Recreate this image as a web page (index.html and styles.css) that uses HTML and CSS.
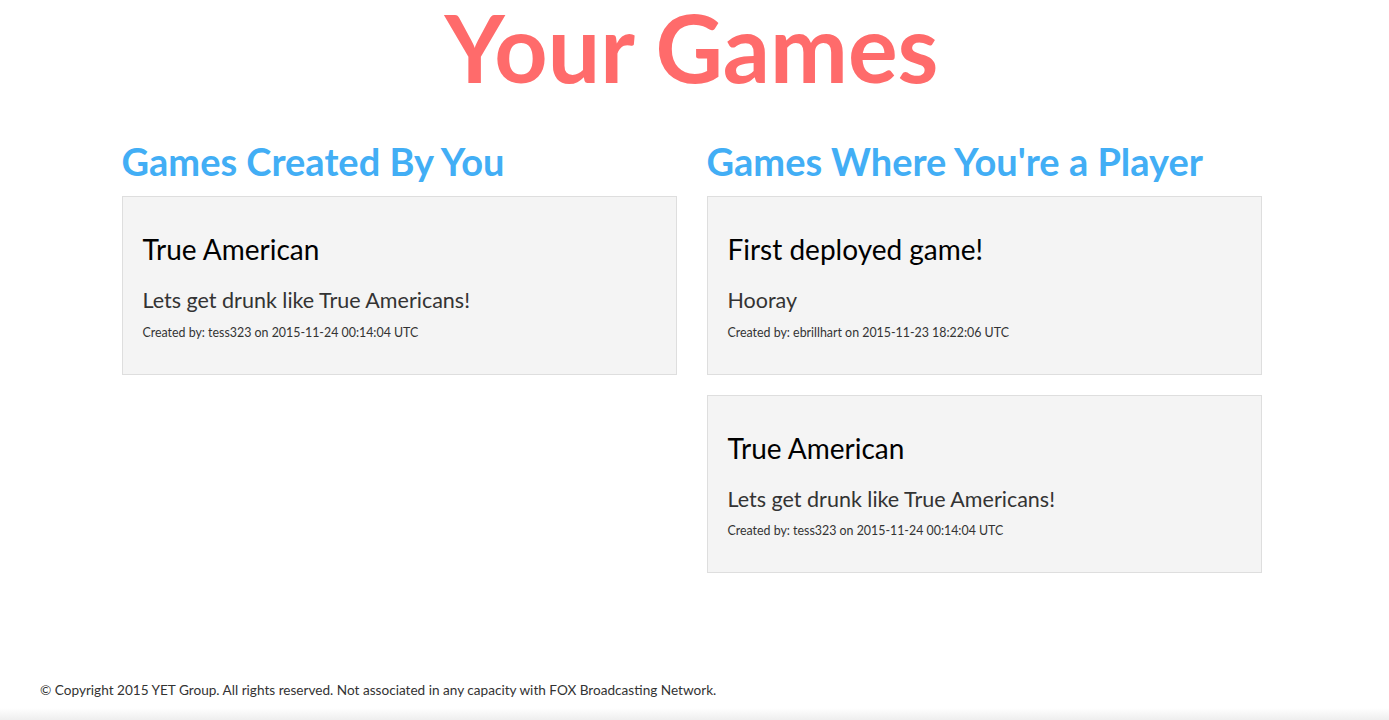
FILE: index.html
```html
<!DOCTYPE html>
<html>
<head>
<meta charset="utf-8">
<title>Your Games</title>
<link rel="stylesheet" href="styles.css">
</head>
<body>
<div class="page">
  <main class="main">
    <h1 class="title">Your Games</h1>
    <div class="columns">
      <section class="column">
        <h2 class="col-heading">Games Created By You</h2>
        <div class="card">
          <h3 class="card-title">True American</h3>
          <p class="card-desc">Lets get drunk like True Americans!</p>
          <p class="card-meta">Created by: tess323 on 2015-11-24 00:14:04 UTC</p>
        </div>
      </section>
      <section class="column">
        <h2 class="col-heading">Games Where You're a Player</h2>
        <div class="card">
          <h3 class="card-title">First deployed game!</h3>
          <p class="card-desc">Hooray</p>
          <p class="card-meta">Created by: ebrillhart on 2015-11-23 18:22:06 UTC</p>
        </div>
        <div class="card">
          <h3 class="card-title">True American</h3>
          <p class="card-desc">Lets get drunk like True Americans!</p>
          <p class="card-meta">Created by: tess323 on 2015-11-24 00:14:04 UTC</p>
        </div>
      </section>
    </div>
  </main>
  <footer class="footer">© Copyright 2015 YET Group. All rights reserved. Not associated in any capacity with FOX Broadcasting Network.</footer>
</div>
</body>
</html>
```

FILE: styles.css
```css
html, body {
  margin: 0;
  padding: 0;
  background: #fff;
}
body {
  font-family: "Lato", "Liberation Sans", sans-serif;
  color: #222;
}
.page {
  min-height: 100vh;
  display: flex;
  flex-direction: column;
}
.main {
  flex: 1;
  padding-right: 6px;
}
.title {
  margin: 0;
  text-align: center;
  font-size: 93px;
  line-height: 94px;
  font-weight: 700;
  color: #ff6b6b;
}
.columns {
  width: 1140px;
  margin: 44px auto 0;
  display: grid;
  grid-template-columns: 1fr 1fr;
  column-gap: 30px;
  align-items: start;
}
.column {
  display: flex;
  flex-direction: column;
  gap: 20px;
}
.col-heading {
  margin: 0 0 -8px;
  font-size: 38px;
  line-height: 46px;
  font-weight: 700;
  color: #42aef5;
  white-space: nowrap;
}
.card {
  background: #f4f4f4;
  border: 1px solid #dedede;
  padding: 35px 20px 33px;
}
.card-title {
  margin: 0;
  font-size: 28px;
  line-height: 34px;
  font-weight: 400;
  color: #000;
}
.card-desc {
  margin: 20px 0 0;
  font-size: 21.5px;
  line-height: 28px;
  color: #333;
}
.card-meta {
  margin: 10.5px 0 0;
  font-size: 12.4px;
  line-height: 16px;
  color: #333;
}
.footer {
  padding: 0 40px 21px;
  font-size: 13.6px;
  line-height: 18px;
  color: #333;
  background: linear-gradient(to bottom, #fff 0%, #fff 70%, #eeeeee 100%);
}
```
